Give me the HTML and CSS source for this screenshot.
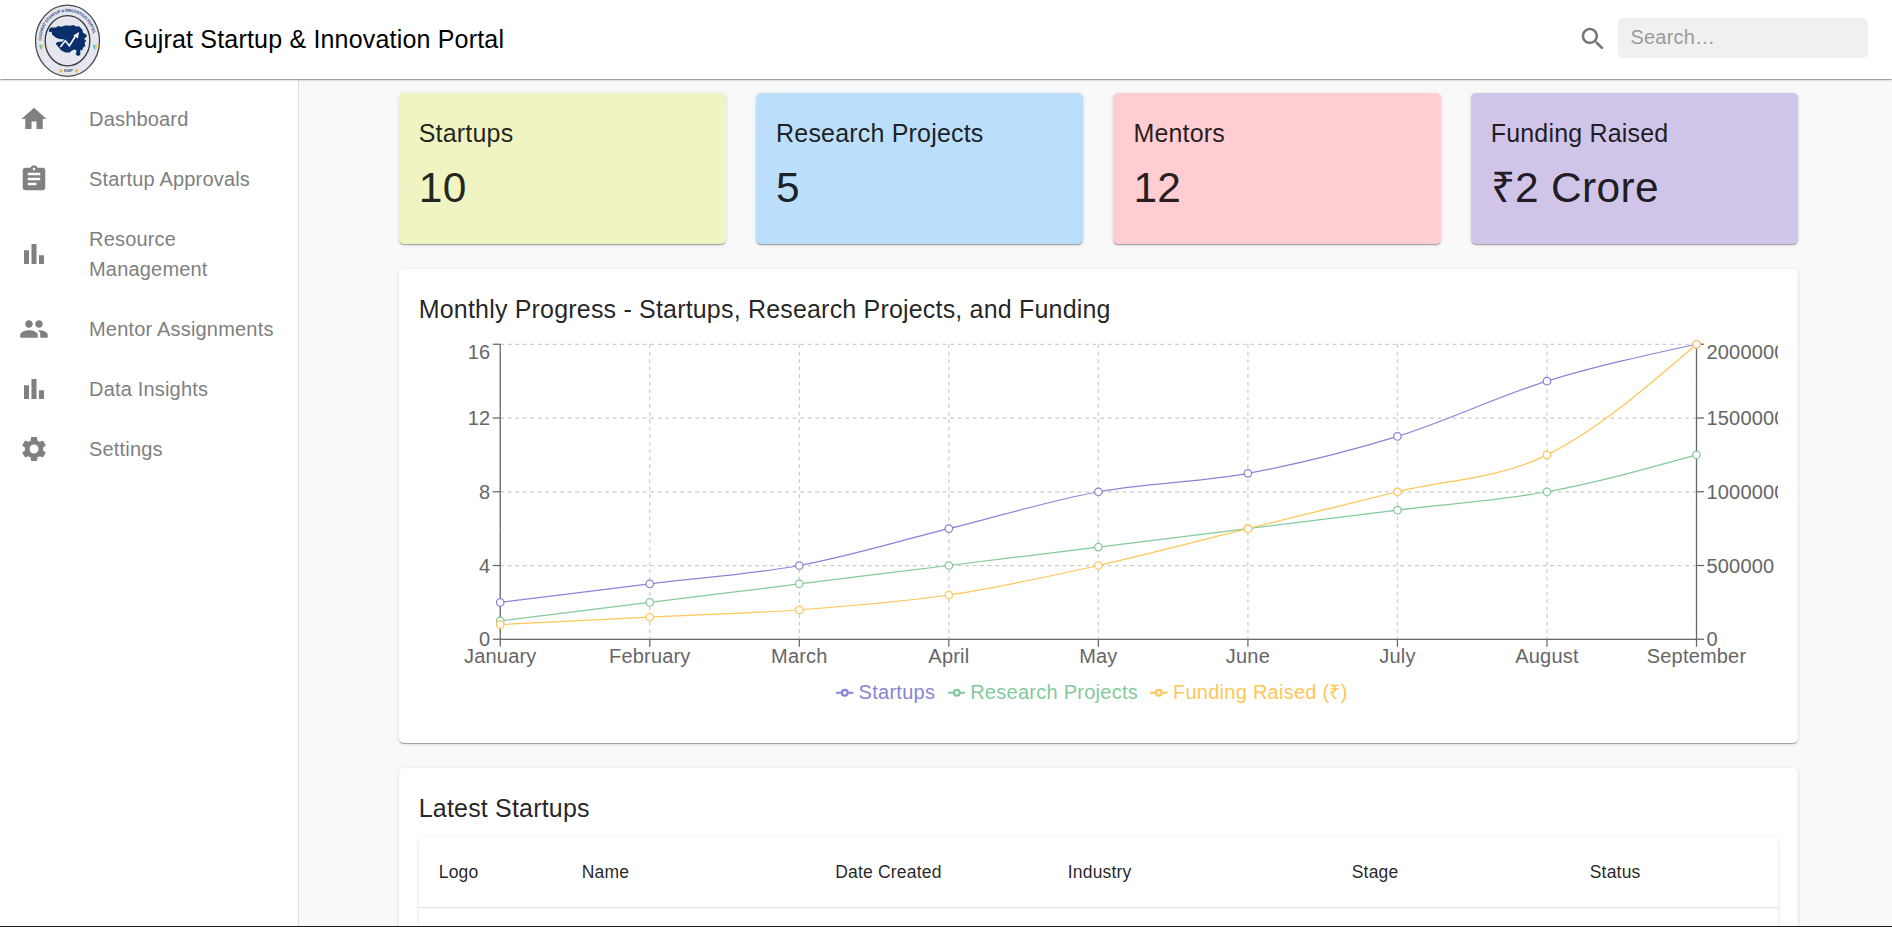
FILE: index.html
```html
<!DOCTYPE html>
<html lang="en">
<head>
<meta charset="utf-8">
<title>Gujrat Startup &amp; Innovation Portal</title>
<link rel="stylesheet" href="styles.css">
</head>
<body>
<div class="app">
  <header class="topbar">
    <svg class="logo" viewBox="42 12 201 220" preserveAspectRatio="none" aria-label="SSIP">
      <ellipse cx="142.500" cy="122" rx="96" ry="106.500" fill="#e6e7ee" stroke="#4a4a4c" stroke-width="4"/>
      <ellipse cx="142.500" cy="122" rx="67" ry="75" fill="#e6e7ee" stroke="#3a3a3c" stroke-width="4"/>
      <path id="ring" d="M64 122A78.500 87 0 0 1 221 122" fill="none"/>
      <text class="ring-text"><textPath href="#ring" textLength="240">GUJARAT STARTUP &amp; INNOVATION PORTAL</textPath></text>
      <path fill="#0b2f6b" d="M87 88L92 82L109 82L113 78L124 80L136 76L151 77L159 75L171 80L176 78L187 88L189 98L199 103L200 110L192 116L199 122L194 128L196 138L189 143L187 151L181 149L181 165L174 168L167 163L170 152L164 148L156 151L149 157L136 157L124 151L114 139L107 131L112 126L128 124L133 118L119 117L108 113L96 103L95 95L87 96Z"/>
      <path d="M121 141L136 122L148 137L169 104" fill="none" stroke="#f3f4f8" stroke-width="5"/>
      <path d="M160 106L177 96L174 115Z" fill="#f3f4f8"/>
      <path fill="#59b8dc" d="M58 134h7v15q-7-3-7-15zM219 134h7v15q-7-3-7-15z"/>
      <path fill="#f3cd4c" d="M65 134h6q0 11-6 15zM226 134h6q0 11-6 15z"/>
      <path fill="#f4b431" d="M119 207l5 0 3 5-3 5h-5zM173 207l-5 0-3 5 3 5h5z"/>
      <text class="ring-label" x="145" y="216" text-anchor="middle">SSIP</text>
    </svg>
    <h1 class="brand">Gujrat Startup &amp; Innovation Portal</h1>
    <div class="search">
      <svg class="icon search-icon" viewBox="0 0 24 24"><path d="M15.500 14h-.79l-.28-.27C15.410 12.590 16 11.110 16 9.500 16 5.910 13.090 3 9.500 3S3 5.910 3 9.500 5.910 16 9.500 16c1.610 0 3.090-.59 4.230-1.570l.27.28v.79l5 4.990L20.490 19zm-6 0C7.010 14 5 11.990 5 9.500S7.010 5 9.500 5 14 7.010 14 9.500 11.990 14 9.500 14"/></svg>
      <input class="search-input" type="text" placeholder="Search…">
    </div>
  </header>

  <div class="body">
    <nav class="sidebar">
      <a class="nav-item"><svg class="icon" viewBox="0 0 24 24"><path d="M10 20v-6h4v6h5v-8h3L12 3 2 12h3v8z"/></svg><span class="nav-text">Dashboard</span></a>
      <a class="nav-item"><svg class="icon" viewBox="0 0 24 24"><path d="M19 3h-4.180C14.400 1.840 13.300 1 12 1s-2.400.84-2.820 2H5c-1.100 0-2 .9-2 2v14c0 1.100.9 2 2 2h14c1.100 0 2-.9 2-2V5c0-1.100-.9-2-2-2m-7 0c.55 0 1 .45 1 1s-.45 1-1 1-1-.45-1-1 .45-1 1-1m2 14H7v-2h7zm3-4H7v-2h10zm0-4H7V7h10z"/></svg><span class="nav-text">Startup Approvals</span></a>
      <a class="nav-item"><svg class="icon" viewBox="0 0 24 24"><path d="M4 9h4v11H4zm12 4h4v7h-4zm-6-9h4v16h-4z"/></svg><span class="nav-text">Resource Management</span></a>
      <a class="nav-item"><svg class="icon" viewBox="0 0 24 24"><path d="M16 11c1.660 0 2.990-1.340 2.990-3S17.660 5 16 5s-3 1.340-3 3 1.340 3 3 3m-8 0c1.660 0 2.990-1.340 2.990-3S9.660 5 8 5 5 6.340 5 8s1.340 3 3 3m0 2c-2.330 0-7 1.170-7 3.500V19h14v-2.500c0-2.330-4.670-3.500-7-3.500m8 0c-.29 0-.62.020-.97.050 1.160.84 1.970 1.970 1.970 3.450V19h6v-2.500c0-2.330-4.670-3.500-7-3.500"/></svg><span class="nav-text">Mentor Assignments</span></a>
      <a class="nav-item"><svg class="icon" viewBox="0 0 24 24"><path d="M4 9h4v11H4zm12 4h4v7h-4zm-6-9h4v16h-4z"/></svg><span class="nav-text">Data Insights</span></a>
      <a class="nav-item"><svg class="icon" viewBox="0 0 24 24"><path d="M19.140 12.940c.04-.3.060-.61.060-.94 0-.32-.02-.64-.07-.94l2.030-1.580c.18-.14.230-.41.120-.61l-1.920-3.320c-.12-.22-.37-.29-.59-.22l-2.390.96c-.5-.38-1.030-.7-1.620-.94l-.36-2.540c-.04-.24-.24-.41-.48-.41h-3.840c-.24 0-.43.170-.47.410l-.36 2.540c-.59.240-1.130.570-1.620.94l-2.390-.96c-.22-.08-.47 0-.59.220L2.740 8.870c-.12.210-.08.470.120.610l2.030 1.580c-.05.300-.09.630-.09.940s.020.640.070.940l-2.030 1.580c-.18.140-.23.410-.12.610l1.920 3.320c.12.220.37.290.59.220l2.390-.96c.5.380 1.030.7 1.620.940l.36 2.540c.05.240.24.410.48.410h3.840c.24 0 .44-.17.470-.41l.36-2.540c.59-.24 1.130-.56 1.620-.94l2.390.96c.22.080.47 0 .59-.22l1.920-3.320c.12-.22.070-.47-.12-.61zM12 15.600c-1.980 0-3.600-1.620-3.600-3.600s1.620-3.600 3.600-3.600 3.600 1.620 3.600 3.600-1.620 3.600-3.600 3.600"/></svg><span class="nav-text">Settings</span></a>
    </nav>

    <main class="content">
      <section class="stats">
        <div class="paper stat lime"><h6 class="title">Startups</h6><div class="value">10</div></div>
        <div class="paper stat blue"><h6 class="title">Research Projects</h6><div class="value">5</div></div>
        <div class="paper stat red"><h6 class="title">Mentors</h6><div class="value">12</div></div>
        <div class="paper stat purple"><h6 class="title">Funding Raised</h6><div class="value">₹2 Crore</div></div>
      </section>

      <section class="paper panel">
        <h6 class="title">Monthly Progress - Startups, Research Projects, and Funding</h6>
        <div class="chart">
          <svg id="plot" class="plot" viewBox="0 0 1087 271"></svg>
          <div class="legend">
            <span class="legend-item startups"><svg class="mark" viewBox="0 0 32 32"><path d="M0,16h10.667A5.333,5.333,0,1,1,21.333,16H32M21.333,16A5.333,5.333,0,1,1,10.667,16"/></svg>Startups</span>
            <span class="legend-item research"><svg class="mark" viewBox="0 0 32 32"><path d="M0,16h10.667A5.333,5.333,0,1,1,21.333,16H32M21.333,16A5.333,5.333,0,1,1,10.667,16"/></svg>Research Projects</span>
            <span class="legend-item funding"><svg class="mark" viewBox="0 0 32 32"><path d="M0,16h10.667A5.333,5.333,0,1,1,21.333,16H32M21.333,16A5.333,5.333,0,1,1,10.667,16"/></svg>Funding Raised (₹)</span>
          </div>
        </div>
      </section>

      <section class="paper panel">
        <h6 class="title">Latest Startups</h6>
        <div class="paper table">
          <div class="row head">
            <span>Logo</span><span>Name</span><span>Date Created</span><span>Industry</span><span>Stage</span><span>Status</span>
          </div>
          <div class="row blank"></div>
        </div>
      </section>
    </main>
  </div>
</div>
<script src="chart.js"></script>
</body>
</html>
```

FILE: styles.css
```css
* { box-sizing: border-box; }

body {
  margin: 0;
  font-family: "Liberation Sans", Arial, sans-serif;
  color: rgba(0, 0, 0, 0.87);
  background: #f9f9f9;
  overflow: hidden;
}

.app {
  height: 927px;
  display: flex;
  flex-direction: column;
  overflow: hidden;
  border-bottom: 1px solid #1c1c1c;
}

.topbar {
  height: 79px;
  flex: none;
  display: flex;
  align-items: center;
  padding: 0 24px 0 34px;
  background: #fff;
  color: #000;
  z-index: 1;
}

.topbar,
.paper {
  box-shadow: 0 2px 1px -1px rgba(0, 0, 0, 0.2),
    0 1px 1px 0 rgba(0, 0, 0, 0.14),
    0 1px 4px 0 rgba(0, 0, 0, 0.12);
}

.logo { width: 67px; height: 73.5px; margin-top: 3px; }
.ring-text { font-size: 12.5px; font-weight: 700; fill: #32508a; }
.ring-label { font-size: 12px; font-weight: 700; fill: #32508a; }

.brand {
  margin: -1px auto 0 23px;
  font-size: 25px;
  font-weight: 400;
  line-height: 40px;
  letter-spacing: 0.0075em;
}

.search { display: flex; align-items: center; gap: 10px; margin-bottom: 3px; }

.search-input {
  width: 250px;
  height: 40px;
  padding: 0 12.5px 2px;
  border: 0;
  border-radius: 5px;
  background: #f0f0f0;
  font: 20px "Liberation Sans", Arial, sans-serif;
  letter-spacing: 0.00938em;
}
.search-input::placeholder { color: #9b9b9b; opacity: 1; }

.icon { width: 30px; height: 30px; flex: none; fill: #808080; }
.search-icon { fill: #757575; margin-top: 2px; }

.body { flex: 1; min-height: 0; display: flex; }

.sidebar {
  width: 299px;
  flex: none;
  padding-top: 10px;
  background: #fff;
  border-right: 1px solid #e0e0e0;
}

.nav-item {
  display: flex;
  align-items: center;
  padding: 15px 20px 15px 19px;
  color: #808080;
}
.nav-text {
  margin-left: 40px;
  font-size: 20px;
  line-height: 30px;
  letter-spacing: 0.00938em;
}

.content {
  flex: 1;
  padding: 14px 94px 0 99.75px;
  display: flex;
  flex-direction: column;
  gap: 25px;
  overflow: hidden;
}

.paper { background: #fff; border-radius: 5px; }

.stats { display: grid; grid-template-columns: repeat(4, 1fr); gap: 30px; }
.stat { padding: 20px 20px 30px; height: 151px; }
.lime { background: #f0f4c3; }
.blue { background: #bbdefb; }
.red { background: #ffcdd2; }
.purple { background: #d1c4e9; }

.title {
  margin: 0 0 8.75px;
  font-size: 25px;
  font-weight: 400;
  line-height: 40px;
  letter-spacing: 0.0075em;
}
.value { font-size: 42.5px; line-height: 52.5px; letter-spacing: 0.00735em; }

.panel { padding: 20px 20px 30px; flex: none; }

.chart { width: 1358.75px; height: 375px; }
.plot { display: block; width: 1358.75px; height: 338.75px; overflow: hidden; }
.plot text { font-size: 16px; letter-spacing: 0.00938em; fill: #666; }
.grid line { stroke: #ccc; stroke-dasharray: 3 3; }
.axis line { stroke: #666; }
.series { fill: none; }
.series circle { fill: #fff; }
.startups { stroke: #8884d8; color: #8884d8; }
.research { stroke: #82ca9d; color: #82ca9d; }
.funding { stroke: #ffc658; color: #ffc658; }

.legend { display: flex; justify-content: center; height: 30px; }
.legend-item {
  display: flex;
  align-items: center;
  margin-right: 12.5px;
  font-size: 20px;
  line-height: 30px;
  letter-spacing: 0.013em;
}
.mark {
  width: 17.5px;
  height: 17.5px;
  margin: 3px 5px 0 0;
  fill: none;
  stroke-width: 4;
}

.row {
  display: grid;
  grid-template-columns: 143px 253.5px 232.5px 284px 238px 1fr;
}
.head {
  border-bottom: 1px solid #e0e0e0;
  font-size: 17.5px;
  line-height: 30px;
  letter-spacing: 0.01071em;
}
.head span { padding: 20px; }
.blank { height: 70px; }
```

FILE: chart.js
```js
const months = ["January", "February", "March", "April", "May", "June", "July", "August", "September"];
const series = [
  { name: "startups", max: 16, values: [2, 3, 4, 6, 8, 9, 11, 14, 16] },
  { name: "research", max: 16, values: [1, 2, 3, 4, 5, 6, 7, 8, 10] },
  { name: "funding", max: 2000000, values: [100000, 150000, 200000, 300000, 500000, 750000, 1000000, 1250000, 2000000] }
];
const left = 65, right = 1022, top_ = 5, bottom = 241;
const step = (right - left) / (months.length - 1);
const px = i => left + i * step;

const line = (x1, y1, x2, y2) => `<line x1="${x1}" y1="${y1}" x2="${x2}" y2="${y2}"/>`;
const label = (x, y, anchor, text) => `<text x="${x}" y="${y}" text-anchor="${anchor}">${text}</text>`;

// Monotone cubic interpolation through the points
function curve(p) {
  const n = p.length;
  const slope = p.slice(1).map((q, i) => (q[1] - p[i][1]) / (q[0] - p[i][0]));
  const t = p.map((_, i) => {
    if (i === 0 || i === n - 1) return 0;
    const a = slope[i - 1], b = slope[i];
    return (Math.sign(a) + Math.sign(b)) * Math.min(Math.abs(a), Math.abs(b), Math.abs(a + b) / 4) || 0;
  });
  t[0] = (3 * slope[0] - t[1]) / 2;
  t[n - 1] = (3 * slope[n - 2] - t[n - 2]) / 2;
  let d = `M${p[0]}`;
  for (let i = 1; i < n; i++) {
    const h = (p[i][0] - p[i - 1][0]) / 3;
    d += `C${p[i - 1][0] + h},${p[i - 1][1] + h * t[i - 1]},${p[i][0] - h},${p[i][1] - h * t[i]},${p[i]}`;
  }
  return d;
}

let grid = "", axis = "", labels = "", lines = "";
for (let k = 0; k <= 4; k++) {
  const y = bottom - k * 59;
  grid += line(left, y, right, y);
  axis += line(left - 6, y, left, y) + line(right, y, right + 6, y);
  const ty = (k === 4 ? y + 6.5 : y) + 5.68;
  labels += label(left - 8, ty, "end", k * 4) + label(right + 8, ty, "start", k * 500000);
}
months.forEach((m, i) => {
  grid += line(px(i), top_, px(i), bottom);
  axis += line(px(i), bottom, px(i), bottom + 6);
  labels += label(px(i), bottom + 19.36, "middle", m);
});
axis += line(left, bottom, right, bottom) + line(left, top_, left, bottom) + line(right, top_, right, bottom);
for (const s of series) {
  const pts = s.values.map((v, i) => [px(i), bottom - v / s.max * (bottom - top_)]);
  lines += `<g class="series ${s.name}"><path d="${curve(pts)}"/>` +
    pts.map(p => `<circle cx="${p[0]}" cy="${p[1]}" r="3"/>`).join("") + "</g>";
}
document.getElementById("plot").innerHTML =
  `<g class="grid">${grid}</g><g class="axis">${axis}</g><g>${labels}</g>${lines}`;
```
